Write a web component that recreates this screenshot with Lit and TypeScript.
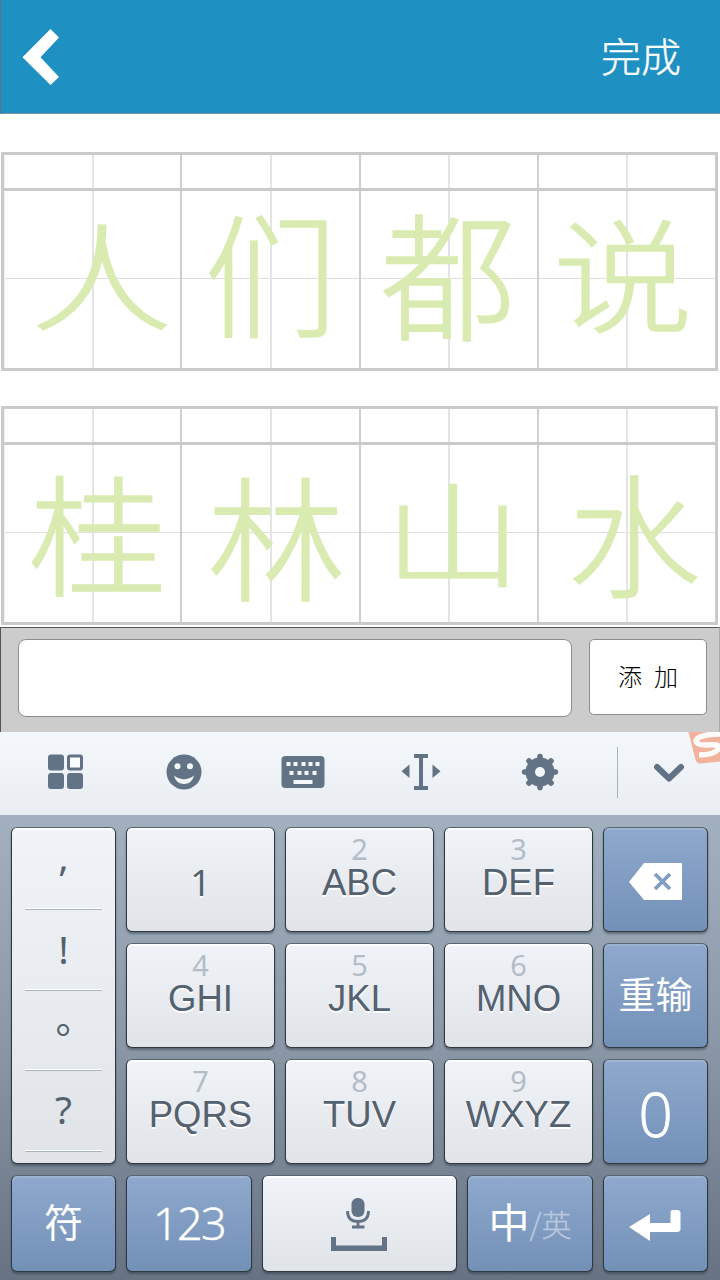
import { LitElement, html, svg, css } from "lit";
import { customElement, property } from "lit/decorators.js";
import { classMap } from "lit/directives/class-map.js";
import { styleMap } from "lit/directives/style-map.js";

type Glyph = { c: string; size: number; dx: number; dy: number; sy?: number };

@customElement("practice-grid")
class PracticeGrid extends LitElement {
  @property({ attribute: false }) glyphs: Glyph[] = [];

  static styles = css`
    :host { display: block; margin: 0 2px 0 1px; height: 219px; }
    .grid {
      box-sizing: border-box; height: 219px; border: 3px solid #cacaca;
      display: grid; grid-template-columns: 176px 179px 178px 1fr; grid-template-rows: 33px 3px 1fr;
    }
    .top, .cell { border-left: 2px solid #cfcfcf; display: flex; justify-content: center; min-width: 0; }
    .top:first-child, .first { border-left-color: #f0f0f0; border-left-width: 1px; }
    .top { background: linear-gradient(#e4e4e4, #e4e4e4) 50% 0 / 2px 100% no-repeat; }
    .bar { grid-column: 1 / -1; background: #cacaca; }
    .cell {
      align-items: center;
      background:
        linear-gradient(#e4e4e4, #e4e4e4) 50% 0 / 2px 100% no-repeat,
        linear-gradient(#dedede, #dedede) 0 87px / 100% 1px no-repeat;
    }
    .ch { font-family: "Noto Sans CJK SC", sans-serif; font-weight: 300; -webkit-text-stroke: 1.5px #d9ebb1; line-height: 1; color: #d9ebb1; }
  `;

  render() {
    return html`<div class="grid">
      ${this.glyphs.map(() => html`<div class="top"></div>`)}
      <div class="bar"></div>
      ${this.glyphs.map((g, i) => html`<div class=${classMap({ cell: true, first: i === 0 })}>
        <span class="ch" style=${styleMap({ fontSize: g.size + "px", transform: `translate(${g.dx}px, ${g.dy}px) scaleY(${g.sy ?? 1})` })}>${g.c}</span>
      </div>`)}
    </div>`;
  }
}

const icons = {
  apps: svg`<svg width="36" height="36" viewBox="0 0 36 36"><g fill="#627386"><rect x="0" y="0.5" width="16" height="16" rx="3"/><rect x="0" y="19" width="16" height="16" rx="3"/><rect x="19" y="19" width="16" height="16" rx="3"/></g><rect x="20.5" y="2" width="13" height="13" rx="1.5" fill="#fafcfd" stroke="#627386" stroke-width="3"/></svg>`,
  smile: svg`<svg width="36" height="36" viewBox="0 0 36 36"><circle cx="18" cy="18" r="17.5" fill="#627386"/><circle cx="11.5" cy="12.3" r="3" fill="#f4f7fa"/><circle cx="24" cy="12.3" r="3" fill="#f4f7fa"/><path d="M8 21.5Q18 29 28 21.5Q26 30 18 30Q10 30 8 21.5Z" fill="#f4f7fa"/></svg>`,
  board: svg`<svg width="44" height="32" viewBox="0 0 44 32"><rect x="0.5" y="0" width="43" height="32" rx="4" fill="#627386"/><g fill="#f4f7fa"><rect x="5.5" y="6" width="4" height="4"/><rect x="12.5" y="6" width="4" height="4"/><rect x="20.5" y="6" width="4" height="4"/><rect x="27.5" y="6" width="4" height="4"/><rect x="34.5" y="6" width="4" height="4"/><rect x="8.5" y="15" width="4" height="4"/><rect x="16.5" y="15" width="4" height="4"/><rect x="23.5" y="15" width="4" height="4"/><rect x="31.5" y="15" width="4" height="4"/><rect x="12.5" y="24" width="19" height="4"/></g></svg>`,
  cursor: svg`<svg width="40" height="36" viewBox="0 0 40 36"><path d="M13 0H27V4H22V32H27V36H13V32H18V4H13ZM8.500 10.500V24L0.500 17.300ZM31.500 10.500V24L39.500 17.300Z" fill="#627386"/></svg>`,
  gear: svg`<svg width="38" height="38" viewBox="-19 -19 38 38"><g stroke="#627386" stroke-width="5.6" stroke-linecap="round"><path d="M0 -15.4V15.4M-15.4 0H15.4M-11 -11L11 11M11 -11L-11 11"/></g><circle r="14.5" fill="#627386"/><circle r="5" fill="#f2f5f9"/></svg>`,
  down: svg`<svg width="32" height="20" viewBox="0 0 32 20"><path d="M4 4L16 15.500L28 4" fill="none" stroke="#627386" stroke-width="6" stroke-linecap="round" stroke-linejoin="round"/></svg>`,
  del: svg`<svg width="54" height="38" viewBox="0 0 54 38"><path d="M15 0H52Q53 0 53 1V36Q53 37 52 37H15L0 19Z" fill="#fff"/><path d="M26 11L41 26M41 11L26 26" stroke="#809dc4" stroke-width="3.8"/></svg>`,
  mic: svg`<svg width="56" height="54" viewBox="0 0 56 54"><rect x="20.5" y="0" width="13" height="19" rx="6" fill="#627386"/><path d="M16.500 13Q16.500 23.500 27 23.500Q37.500 23.500 37.500 13M27 23.500V29M21 29H33.500" fill="none" stroke="#627386" stroke-width="2.800"/><path d="M0 39H5V47.500H51V39H56V53H0Z" fill="#627386"/></svg>`,
  enter: svg`<svg width="52" height="32" viewBox="0 0 52 32"><path d="M41.500 2Q41.500 0 43.500 0H48Q51.500 0 51.500 3V19Q51.500 22 48 22H21V31L0 17L21 4V13H41.500Z" fill="#fff"/></svg>`,
};

const firstLine: Glyph[] = [
  { c: "人", size: 142, dx: 9, dy: -9, sy: 0.82 },
  { c: "们", size: 133, dx: 0, dy: -10 },
  { c: "都", size: 135, dx: -1, dy: -10, sy: 1.03 },
  { c: "说", size: 140, dx: -4, dy: -11, sy: 0.88 },
];

const secondLine: Glyph[] = [
  { c: "桂", size: 138, dx: 5, dy: -5, sy: 0.95 },
  { c: "林", size: 138, dx: 6, dy: -1, sy: 0.97 },
  { c: "山", size: 138, dx: 4, dy: -5, sy: 0.82 },
  { c: "水", size: 133, dx: 7, dy: -4 },
];

@customElement("app-root")
class AppRoot extends LitElement {
  static styles = css`
    :host { display: block; width: 720px; height: 1280px; overflow: hidden; background: #fff; font-family: "Liberation Sans", "Noto Sans CJK SC", sans-serif; }
    svg { display: block; }
    .page { display: flex; flex-direction: column; height: 1280px; }
    .head {
      box-sizing: border-box; height: 114px; padding: 0 39px 0 21px; display: flex; justify-content: space-between; align-items: center;
      background: #1e90c1; border-left: 1px solid #5a7580; border-bottom: 1px solid #7b8f98; color: #fff;
    }
    .done { font: 300 40px/44px "Noto Sans CJK SC", sans-serif; padding-bottom: 3px; -webkit-text-stroke: 0.4px #fff; }
    .sheets { height: 513px; box-sizing: border-box; padding-top: 38px; display: flex; flex-direction: column; gap: 35px; }
    .entry {
      box-sizing: border-box; height: 105px; padding: 11px 12px 0 17px; display: flex; gap: 17px;
      background: #ccc; border-top: 1px solid #555; border-left: 1px solid #555; border-right: 1px solid #aaa;
    }
    .field { box-sizing: border-box; width: 554px; height: 78px; border: 1px solid #8c8c8c; border-radius: 8px; background: #fff; }
    .add {
      box-sizing: border-box; width: 118px; height: 76px; border: 1px solid #8c8c8c; border-radius: 5px; background: #fff; padding-bottom: 3px;
      display: flex; gap: 12px; align-items: center; justify-content: center; font: 300 24px/24px "Noto Sans CJK SC", sans-serif; color: #000;
    }
    .tools { position: relative; height: 83px; display: flex; background: linear-gradient(#f5f8fb, #e9edf2); }
    .tool { width: 118.6px; display: flex; align-items: center; justify-content: center; padding-bottom: 3px; box-sizing: border-box; }
    .tool:first-child { width: 125px; padding-left: 7px; }
    .sep { width: 1px; height: 51px; margin: 15px 0 0 17.6px; background: #a3b5c5; }
    .hide { flex: 1; display: flex; align-items: center; justify-content: center; padding: 0 0 2px 0; }
    .badge { position: absolute; right: 0; top: 0; }
    .pad {
      box-sizing: border-box; height: 465px; padding: 12px 12px 8px 11px; display: flex; flex-direction: column; gap: 11px;
      background: linear-gradient(#a2b0bf, #8b98a7 48%, #677383);
    }
    .main { display: grid; grid-template-columns: 105px 149px 149px 149px 105px; grid-template-rows: repeat(3, 105px); gap: 11px 10px; }
    .last { display: grid; grid-template-columns: 105px 126px 195px 126px 105px; height: 97px; gap: 10px; }
    .key {
      box-sizing: border-box; border: 1px solid #2f3740; border-top-color: #5b6570; border-radius: 6px; min-width: 0;
      background: linear-gradient(#f0f4f9, #e0e3e8); color: #54616f;
      box-shadow: inset 0 2px 0 #fff, 0 2px 2px rgba(40, 50, 60, 0.45);
      display: flex; flex-direction: column; align-items: center;
    }
    .blue { background: linear-gradient(#8ea9cd, #7390b7); color: #fff; box-shadow: inset 0 2px 0 #9db4d4, 0 2px 2px rgba(40, 50, 60, 0.45); justify-content: center; }
    .num { font: 29px/24px "Noto Sans", sans-serif; color: #b3bcc7; margin: 9px 0 4px; height: 24px; }
    .abc { font-size: 36.5px; line-height: 36px; text-shadow: 0 2px 0 #fff; }
    .one { font: 36px/36px "Noto Sans", sans-serif; margin-top: 37px; text-shadow: 0 2px 0 #fff; }
    .punct { grid-row: 1 / 4; grid-column: 1; padding: 0 13px; align-items: stretch; }
    .mark {
      box-sizing: border-box; height: 80.7px; border-bottom: 1px solid #a7b5c2; box-shadow: inset 0 -1px 0 #fff;
      font: 39px/78px "Noto Sans", "Noto Sans CJK SC", sans-serif; text-align: center;
    }
    .mark:first-child { height: 82px; line-height: 56px; }
    .mark:nth-child(3) { line-height: 54px; padding-left: 23px; }
    .mark:nth-child(4) { line-height: 76px; }
    .redo { font: 37px/40px "Noto Sans CJK SC", sans-serif; padding-bottom: 6px; }
    .zero { font: 300 60px/60px "Open Sans", sans-serif; padding-top: 4px; -webkit-text-stroke: 0.9px #fff; }
    .sym { font: 39px/40px "Noto Sans CJK SC", sans-serif; padding-bottom: 7px; }
    .digits { font: 300 45px/44px "Open Sans", sans-serif; letter-spacing: -1.7px; padding-bottom: 2px; -webkit-text-stroke: 0.6px #fff; }
    .lang { flex-direction: row; align-items: center; font: 41px/42px "Noto Sans CJK SC", sans-serif; padding-bottom: 7px; }
    .en { font: 300 30px/36px "Noto Sans CJK SC", sans-serif; color: #b9c7de; padding-top: 5px; -webkit-text-stroke: 0.4px #b9c7de; }
    .voice { padding: 22px 2px 0 0; }
    .erase { padding-top: 4px; }
    .return { padding: 5px 2px 0 0; }
  `;

  letters(n: string, t: string) {
    return html`<div class="key"><span class="num">${n}</span><span class="abc">${t}</span></div>`;
  }

  render() {
    return html`<div class="page">
      <div class="head">
        <svg width="38" height="58" viewBox="0 0 38 58"><path d="M28.5 1L37 9.500L18.500 29.300L37 49L28.500 57L0.500 29.300Z" fill="#fff"/></svg>
        <span class="done">完成</span>
      </div>
      <div class="sheets">
        <practice-grid .glyphs=${firstLine}></practice-grid>
        <practice-grid .glyphs=${secondLine}></practice-grid>
      </div>
      <div class="entry">
        <div class="field"></div>
        <div class="add"><span>添</span><span>加</span></div>
      </div>
      <div class="tools">
        ${[icons.apps, icons.smile, icons.board, icons.cursor, icons.gear].map((i) => html`<div class="tool">${i}</div>`)}
        <div class="sep"></div>
        <div class="hide">${icons.down}</div>
        <svg class="badge" width="32" height="33" viewBox="0 0 32 33"><path d="M0.500 0H32V29.500Q22 30.500 13 31.500Q8.500 32 7.500 27.500Z" fill="#f3b29c"/><path d="M36 2Q9 2 8 9Q8.500 13.500 20 13Q32 12 31 16Q27 23 11 23" fill="none" stroke="#fdfafa" stroke-width="5.500"/></svg>
      </div>
      <div class="pad">
        <div class="main">
          <div class="key punct">${[",", "!", "。", "?"].map((m) => html`<div class="mark">${m}</div>`)}</div>
          <div class="key"><span class="one">1</span></div>
          ${this.letters("2", "ABC")}${this.letters("3", "DEF")}
          <div class="key blue erase">${icons.del}</div>
          ${this.letters("4", "GHI")}${this.letters("5", "JKL")}${this.letters("6", "MNO")}
          <div class="key blue"><span class="redo">重输</span></div>
          ${this.letters("7", "PQRS")}${this.letters("8", "TUV")}${this.letters("9", "WXYZ")}
          <div class="key blue"><span class="zero">0</span></div>
        </div>
        <div class="last">
          <div class="key blue"><span class="sym">符</span></div>
          <div class="key blue"><span class="digits">123</span></div>
          <div class="key voice">${icons.mic}</div>
          <div class="key blue lang"><span>中</span><span class="en">/英</span></div>
          <div class="key blue return">${icons.enter}</div>
        </div>
      </div>
    </div>`;
  }
}
